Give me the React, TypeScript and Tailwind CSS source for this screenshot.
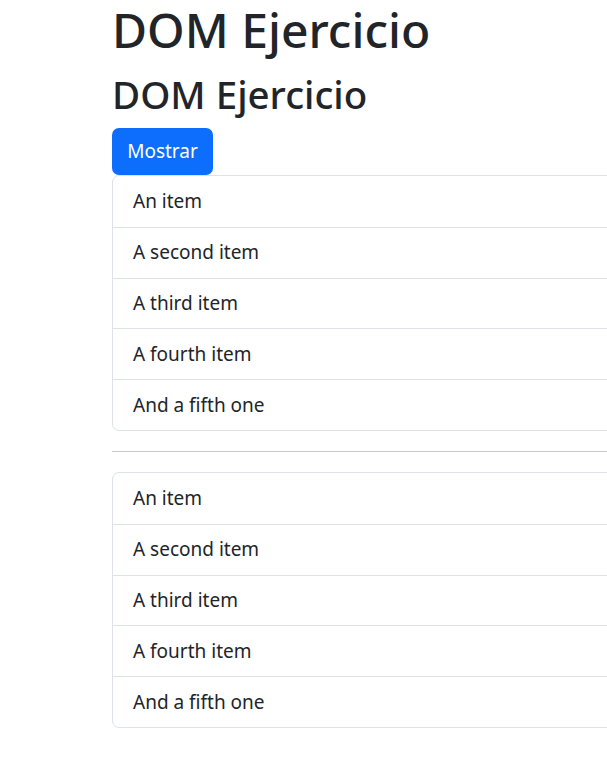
import React from "react";

const items = ["An item", "A second item", "A third item", "A fourth item", "And a fifth one"];

function List() {
  return (
    <ul className="w-[560px] border border-[#dee2e6] rounded-[7px] m-0 p-0 list-none">
      {items.map((t, i) => (
        <li
          key={i}
          className={`h-[50.8px] px-[20px] flex items-center text-[19px] text-[#212529] ${i > 0 ? "border-t border-[#dee2e6]" : ""}`}
        >
          {t}
        </li>
      ))}
    </ul>
  );
}

export default function App() {
  return (
    <div className="w-[607px] h-[758px] overflow-hidden bg-white" style={{ fontFamily: '"Noto Sans", "Open Sans", sans-serif' }}>
      <div className="pl-[112px]">
        <h1 className="leading-[60px] text-[48px] font-medium text-[#212529] mb-[10px]">DOM Ejercicio</h1>
        <h2 className="leading-[48px] text-[38.5px] font-medium text-[#212529] mb-[10px]">DOM Ejercicio</h2>
        <button className="h-[47px] w-[101px] bg-[#0d6efd] text-white text-[19px] rounded-[7px] block">Mostrar</button>
        <List />
        <hr className="w-[560px] my-[20px] border-0 border-t border-[#c8c9ca]" />
        <List />
      </div>
    </div>
  );
}
